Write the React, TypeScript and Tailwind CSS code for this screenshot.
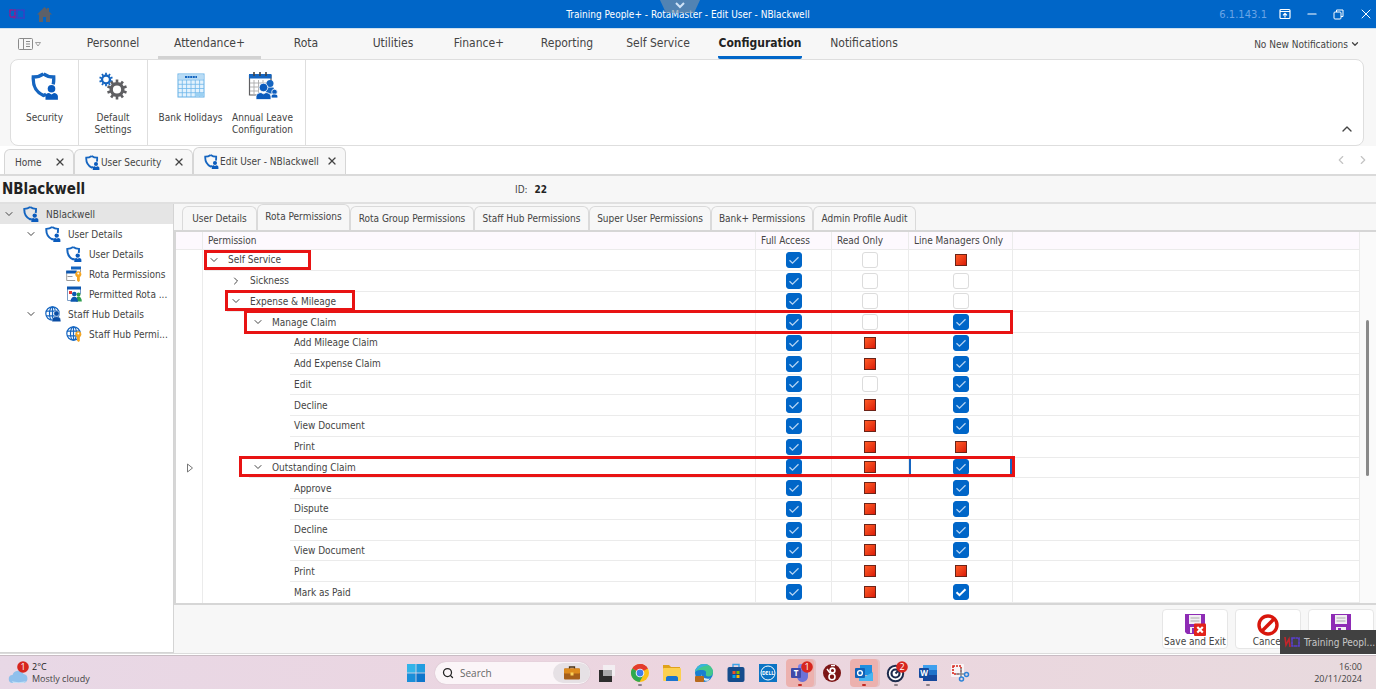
import { ReactNode, SVGProps } from "react"
import {
  ChevronDown,
  ChevronLeft,
  ChevronRight,
  ChevronUp,
  Minus,
  Search,
  X,
} from "lucide-react"
import clsx from "clsx"

type IconProps = SVGProps<SVGSVGElement>

/* ---------- icons ---------- */

const ShieldUser = (props: IconProps) => (
  <svg viewBox="0 0 28 28" {...props}>
    <path
      d="M12.500 1.800C9.500 4 6 5 2.300 5c-.4 7 .6 14 10.200 18.500 1-.4 1.800-.9 2.600-1.400M12.500 1.800C15.500 4 19 5 22.700 5c.1 2.500.1 5-.5 7.400"
      fill="none"
      stroke="#1565c0"
      strokeWidth="3.400"
    />
    <circle cx="20.500" cy="16.800" r="3.800" fill="#0a5bbd" />
    <path d="M14.500 27.800v-3.500c0-2 1.600-3.200 3.500-3.200l2.500 1.400 2.500-1.400c2 0 3.900 1.400 3.900 3.200v3.500z" fill="#0a5bbd" />
  </svg>
)

const Gear = ({ cx, cy, r, color }: { cx: number; cy: number; r: number; color: string }) => (
  <g transform={`translate(${cx} ${cy})`} stroke={color}>
    <circle r={r * 0.58} fill="none" strokeWidth={r * 0.34} />
    {[0, 36, 72, 108, 144, 180, 216, 252, 288, 324].map((angle) => (
      <line
        key={angle}
        y1={-r * 0.68}
        y2={-r}
        strokeWidth={r * 0.26}
        transform={`rotate(${angle})`}
      />
    ))}
  </g>
)

const Gears = (props: IconProps) => (
  <svg viewBox="0 0 28 28" {...props}>
    <Gear cx={7} cy={7.500} r={6.800} color="#1565c0" />
    <Gear cx={18} cy={17.500} r={10} color="#5f5f62" />
  </svg>
)

const CalendarGrid = (props: IconProps) => (
  <svg viewBox="0 0 28 28" {...props}>
    <rect x="1" y="2" width="26" height="23" fill="#e3f2fd" stroke="#64b0e6" />
    <rect x="1.500" y="2.500" width="25" height="5" fill="#b9dcf5" />
    <path d="M8 5h12" stroke="#1565c0" strokeWidth="2" strokeDasharray="2 .6" />
    <path
      d="M1 8h26M1 12.300h26M1 16.500h26M1 20.700h26M5.300 8v17M9.600 8v17M14 8v17M18.300 8v17M22.600 8v17"
      stroke="#6fb6ea"
      strokeWidth=".8"
    />
    <rect x="18.500" y="21" width="8" height="3.500" fill="#9bd0f2" />
  </svg>
)

const CalendarPeople = (props: IconProps) => (
  <svg viewBox="0 0 30 28" {...props}>
    <path d="M1.500 3v20H9M23 3v6" fill="none" stroke="#5f5f62" strokeWidth="1.200" />
    <path d="M1 2h22.500v4.500H1z" fill="#1565c0" />
    <path d="M6 0v4M12 0v4M18 0v4" stroke="#444" strokeWidth="1.600" />
    <path d="M2 11h20M2 15h12M2 19h8M6 8v14M10.500 8v14M15 8v6" stroke="#aaa" strokeWidth=".9" />
    <circle cx="22" cy="11.500" r="3.500" fill="#1565c0" />
    <path d="M18.500 15.500h7l1.500 6h-9z" fill="#1565c0" />
    <g fill="#0a5bbd" stroke="#fff" strokeWidth=".8">
      <circle cx="26.500" cy="20" r="2.800" />
      <path d="M23 26v-1.500c0-2 2-2.500 3.500-2.500s3.300.8 3.300 2.500V26z" />
      <circle cx="15.500" cy="15.500" r="4.300" />
      <path d="M8 27.600v-2.800c0-3 2.600-4 5-4.300l2.500 1.300 2.500-1.300c2.600.3 5 1.500 5 4.300v2.800z" />
    </g>
  </svg>
)

const KeyShape = () => (
  <g fill="#f5a623">
    <circle cx="12.300" cy="8.300" r="3" />
    <path d="M11 10.500h2.800V15l-1.400 1L11 14.600z" />
    <circle cx="12.300" cy="7.600" r="1" fill="#fff" />
  </g>
)

const FormKey = (props: IconProps) => (
  <svg viewBox="0 0 16 16" {...props}>
    <rect x="5" y=".5" width="10" height="3" fill="#1565c0" />
    <path d="M14.500 3v3M.7 5v9.500h8.500M1.500 10.500h5" fill="none" stroke="#9a9a9a" />
    <rect x=".2" y="4.500" width="10.500" height="3" fill="#0d57b0" />
    <KeyShape />
  </svg>
)

const PermittedRota = (props: IconProps) => (
  <svg viewBox="0 0 16 16" {...props}>
    <path d="M1.500 2v12.500H6M14.500 2v6" fill="none" stroke="#7a9cc6" />
    <rect x="1" y=".5" width="14" height="3" fill="#0d57b0" />
    <rect x="3" y="5" width="3" height="3" fill="#e53935" />
    <circle cx="12.500" cy="8.500" r="2" fill="#2e9e4f" />
    <path d="M10 15.500c0-3 .5-5 2.500-5s3.300 2 3.300 5z" fill="#2e9e4f" />
    <circle cx="8.300" cy="8" r="2.300" fill="#0d57b0" />
    <path d="M4.500 15.800c0-3 1.500-5 3.800-5s3.700 2 3.700 5z" fill="#0d57b0" />
  </svg>
)

const Globe = ({ withKey, ...props }: IconProps & { withKey?: boolean }) => (
  <svg viewBox="0 0 16 16" {...props}>
    <g fill="none" stroke="#1565c0" strokeWidth="1.200">
      <circle cx="7.500" cy="7.500" r="6.700" />
      <ellipse cx="7.500" cy="7.500" rx="3" ry="6.700" />
      <path d="M1 5.200h13M1 9.800h13M7.500 1v13" />
    </g>
    {withKey ? (
      <KeyShape />
    ) : (
      <g fill="#0a4da3" stroke="#fff" strokeWidth=".5">
        <circle cx="11.500" cy="7.500" r="2.700" />
        <path d="M7 15.800v-1.600c0-2 1.800-3.600 4.500-3.600s4.300 1.600 4.300 3.600v1.600z" />
      </g>
    )}
  </svg>
)

const Floppy = ({ exit, ...props }: IconProps & { exit?: boolean }) => (
  <svg viewBox="0 0 22 22" {...props}>
    <path d="M1 0h20v20H3l-2-2z" fill="#8e2bb5" />
    <rect x="5" y="1" width="12" height="9" fill="#f1eef3" />
    <path d="M6.500 4h9M6.500 7h9" stroke="#aaa" />
    <rect x="6" y="13" width="10" height="6" fill="#f1eef3" />
    <rect x="8" y="14" width="3" height="5" fill="#8e2bb5" />
    {exit && (
      <>
        <rect x="10" y="9.500" width="12" height="12.500" rx="1" fill="#e2231a" />
        <path d="M13.300 13l5.500 5.500M18.800 13l-5.500 5.500" stroke="#fff" strokeWidth="2.200" />
      </>
    )}
  </svg>
)

const Forbidden = (props: IconProps) => (
  <svg viewBox="0 0 22 22" {...props}>
    <circle cx="11" cy="11" r="9" fill="#fff" stroke="#d8160c" strokeWidth="3.400" />
    <path d="M17 5L5 17" stroke="#d8160c" strokeWidth="3.400" />
  </svg>
)

const AppLogo = (props: IconProps) => (
  <svg viewBox="0 0 16 12" fill="none" strokeWidth="1.600" {...props}>
    <path d="M1 2h5v7H1zM4 8l2 3" stroke="#8b1f8f" strokeDasharray="3 .5" />
    <path d="M8 2h7v8H8z" stroke="#3b3fc4" strokeDasharray="3 .4" />
  </svg>
)

/* ---------- data ---------- */

const MENU = [
  { label: "Personnel", width: "w-[90px]" },
  { label: "Attendance+", width: "w-[103px]", hovered: true },
  { label: "Rota", width: "w-[90px]" },
  { label: "Utilities", width: "w-[84px]" },
  { label: "Finance+", width: "w-[88px]" },
  { label: "Reporting", width: "w-[88px]" },
  { label: "Self Service", width: "w-[94px]" },
  { label: "Configuration", width: "w-[110px]", active: true },
  { label: "Notifications", width: "w-[98px]" },
]

const PERMISSION_TABS = [
  { label: "User Details", width: "w-[75px]" },
  { label: "Rota Permissions", width: "w-[93px]", active: true },
  { label: "Rota Group Permissions", width: "w-[124px]" },
  { label: "Staff Hub Permissions", width: "w-[115px]" },
  { label: "Super User Permissions", width: "w-[122px]" },
  { label: "Bank+ Permissions", width: "w-[102px]" },
  { label: "Admin Profile Audit", width: "w-[103px]" },
]

type TreeItem = { label: string; level: number; open?: boolean; icon: ReactNode }

const TREE: TreeItem[] = [
  { label: "NBlackwell", level: 0, open: true, icon: <ShieldUser className="size-4" /> },
  { label: "User Details", level: 1, open: true, icon: <ShieldUser className="size-4" /> },
  { label: "User Details", level: 2, icon: <ShieldUser className="size-4" /> },
  { label: "Rota Permissions", level: 2, icon: <FormKey className="size-4" /> },
  { label: "Permitted Rota ...", level: 2, icon: <PermittedRota className="size-4" /> },
  { label: "Staff Hub Details", level: 1, open: true, icon: <Globe className="size-4" /> },
  { label: "Staff Hub Permi...", level: 2, icon: <Globe withKey className="size-4" /> },
]

const TREE_INDENT = ["pl-[3px]", "pl-[25px]", "pl-[46px]"]

// on = ticked, off = empty, na = not applicable
type Access = "on" | "off" | "na"

type PermissionRow = {
  label: string
  level: number
  node?: "open" | "closed"
  access: [Access, Access, Access]
  current?: boolean
}

const ROWS: PermissionRow[] = [
  { label: "Self Service", level: 0, node: "open", access: ["on", "off", "na"] },
  { label: "Sickness", level: 1, node: "closed", access: ["on", "off", "off"] },
  { label: "Expense & Mileage", level: 1, node: "open", access: ["on", "off", "off"] },
  { label: "Manage Claim", level: 2, node: "open", access: ["on", "off", "on"] },
  { label: "Add Mileage Claim", level: 3, access: ["on", "na", "on"] },
  { label: "Add Expense Claim", level: 3, access: ["on", "na", "on"] },
  { label: "Edit", level: 3, access: ["on", "off", "on"] },
  { label: "Decline", level: 3, access: ["on", "na", "on"] },
  { label: "View Document", level: 3, access: ["on", "na", "on"] },
  { label: "Print", level: 3, access: ["on", "na", "na"] },
  { label: "Outstanding Claim", level: 2, node: "open", access: ["on", "na", "on"], current: true },
  { label: "Approve", level: 3, access: ["on", "na", "on"] },
  { label: "Dispute", level: 3, access: ["on", "na", "on"] },
  { label: "Decline", level: 3, access: ["on", "na", "on"] },
  { label: "View Document", level: 3, access: ["on", "na", "on"] },
  { label: "Print", level: 3, access: ["on", "na", "na"] },
  { label: "Mark as Paid", level: 3, access: ["on", "na", "on"] },
]

const COLUMNS = ["Full Access", "Read Only", "Line Managers Only"]

const ROW_INDENT = ["ml-[2px]", "ml-6", "ml-[46px]", "ml-[87px]"]

/* ---------- pieces ---------- */

const TitleBar = () => (
  <header className="relative grid h-7 shrink-0 grid-cols-[1fr_auto_1fr] items-center bg-[#0066c8] text-white">
    <div className="flex items-center gap-3 pl-[9px]">
      <AppLogo className="h-3 w-4" />
      <svg viewBox="0 0 15 15" className="size-[15px]" fill="#5d6068">
        <path d="M7.500 0L0 7.500h2V15h4v-5h3v5h4V7.500h2l-3-3V1h-2v1.500z" />
      </svg>
    </div>
    <h1 className="text-[10px]">Training People+ - RotaMaster - Edit User - NBlackwell</h1>
    <div className="flex items-center justify-end pr-0.5">
      <span className="mr-3 font-['DejaVu_Sans',sans-serif] text-[10px] text-[#6aa5e6]">
        6.1.143.1
      </span>
      <button aria-label="Full screen" className="mr-3.5">
        <svg viewBox="0 0 12 12" className="size-3" fill="none" stroke="#fff" strokeWidth="1.200">
          <rect x="1" y="1.500" width="10" height="9" rx="1" />
          <path d="M1 3.500h10M6 9.500V5.500M4 7.300l2-2 2 2" />
        </svg>
      </button>
      <button aria-label="Minimise" className="mr-3.5">
        <Minus className="size-3.5" />
      </button>
      <button aria-label="Restore" className="mr-3.5">
        <svg viewBox="0 0 11 11" className="size-[11px]" fill="none" stroke="#fff">
          <rect x="1" y="3" width="7" height="7" rx="1" />
          <path d="M3.500 3V1h6.500v6.500H8" />
        </svg>
      </button>
      <button aria-label="Close">
        <X className="size-4" strokeWidth={1.500} />
      </button>
    </div>
    <svg viewBox="0 0 40 13" className="absolute top-0 left-1/2 h-[13px] w-10 -translate-x-7">
      <path d="M0 0h40l-6 13H6z" fill="#7d93a8" fillOpacity=".65" />
      <path d="M16 3l4 4 4-4" fill="none" stroke="#cfe3f7" strokeWidth="2" />
    </svg>
  </header>
)

const MenuBar = () => (
  <nav className="flex h-[31px] shrink-0 items-stretch border-t border-[#cfe0ee] pl-[18px]">
    <button aria-label="Layout" className="flex w-[50px] items-center">
      <svg viewBox="0 0 24 12" className="h-3 w-6" fill="none" stroke="#8b8b8b">
        <rect x=".5" y=".5" width="14" height="11" rx="1" />
        <path d="M5.500 1v10M8 3.500h4M8 6h4M8 8.500h4" />
        <path d="M17.500 4.500h5L20 8z" strokeWidth=".8" />
      </svg>
    </button>
    {MENU.map((item) => (
      <button
        key={item.label}
        className={clsx(
          "flex flex-col items-center pt-0.5 text-[12px] leading-[25px]",
          item.width,
          item.active && "font-bold text-[#222]"
        )}
      >
        <span
          className={clsx(
            "border-b-3",
            item.hovered && "w-full border-[#d2d2d2]",
            item.active && "rounded-b-xs border-[#0066c8]",
            !item.hovered && !item.active && "border-transparent"
          )}
        >
          {item.label}
        </span>
      </button>
    ))}
    <button className="ml-auto flex items-center gap-0.5 pr-4 text-[10px]">
      No New Notifications <ChevronDown className="size-2.5" strokeWidth={3} />
    </button>
  </nav>
)

const RibbonButton = ({ icon, label, width }: { icon: ReactNode; label: string; width: string }) => (
  <button className={clsx("flex flex-col items-center gap-3 pt-3 text-[10px] leading-3", width)}>
    {icon}
    <span>{label}</span>
  </button>
)

const Ribbon = () => (
  <section className="mr-3 ml-[10px] flex h-[87px] shrink-0 items-stretch rounded-lg border border-[#dedede] bg-white">
    <div className="flex w-[68px] justify-center border-r border-[#dedede]">
      <RibbonButton icon={<ShieldUser className="size-7" />} label="Security" width="w-16" />
    </div>
    <div className="flex w-[69px] justify-center border-r border-[#dedede]">
      <RibbonButton icon={<Gears className="size-7" />} label="Default Settings" width="w-12" />
    </div>
    <div className="flex w-[158px] justify-center border-r border-[#dedede]">
      <RibbonButton icon={<CalendarGrid className="size-7" />} label="Bank Holidays" width="w-[72px]" />
      <RibbonButton icon={<CalendarPeople className="h-7 w-[30px]" />} label="Annual Leave Configuration" width="w-[72px]" />
    </div>
    <button aria-label="Collapse ribbon" className="mt-auto mr-2 mb-2 ml-auto">
      <ChevronUp className="size-4" />
    </button>
  </section>
)

const DocumentTab = ({
  label,
  icon,
  active,
  width,
}: {
  label: string
  icon?: boolean
  active?: boolean
  width: string
}) => (
  <div
    className={clsx(
      "flex items-center justify-between rounded-t-md border border-b-0 border-[#d6d6d6] bg-[#f7f7f7] pr-[7px] pl-2.5 text-[10px]",
      active ? "h-[27px]" : "h-[25px]",
      width
    )}
  >
    <a href="#" className="flex items-center whitespace-nowrap">
      {icon && <ShieldUser className="mr-px size-[15px]" />}
      {label}
    </a>
    <button aria-label={`Close ${label}`}>
      <X className="size-3" strokeWidth={2.500} />
    </button>
  </div>
)

const DocumentTabs = () => (
  <div className="flex h-[30px] shrink-0 items-end border-b-2 border-[#dadada] bg-white pr-1.5 pl-1">
    <DocumentTab label="Home" width="w-[70px]" />
    <DocumentTab label="User Security" icon width="w-[119px]" />
    <DocumentTab label="Edit User - NBlackwell" icon active width="w-[153px]" />
    <div className="mb-[7px] ml-auto flex gap-2 text-[#c4c4c4]">
      <ChevronLeft className="size-3.5" />
      <ChevronRight className="size-3.5" />
    </div>
  </div>
)

const NavTree = () => (
  <aside className="w-[174px] shrink-0 border-r border-b border-[#d4d4d4] bg-white">
    <ul>
      {TREE.map((item, idx) => (
        <li
          key={idx}
          className={clsx(
            "flex h-5 items-center text-[10px] whitespace-nowrap",
            TREE_INDENT[item.level],
            idx === 0 && "bg-[#e5e5e5]"
          )}
        >
          <span className="mr-2 w-3">{item.open && <ChevronDown className="size-3" />}</span>
          {item.icon}
          <a href="#" className="ml-[7px]">
            {item.label}
          </a>
        </li>
      ))}
    </ul>
  </aside>
)

const AccessBox = ({ value, label, bold }: { value: Access; label: string; bold?: boolean }) => {
  if (value === "na") {
    return (
      <input
        type="checkbox"
        disabled
        aria-label={label}
        className="mx-auto block size-3 appearance-none border border-[#6b2418] bg-linear-to-br from-[#ff5a26] to-[#dc1708]"
      />
    )
  }

  return (
    <label className="mx-auto grid size-4 place-items-center">
      <input
        type="checkbox"
        defaultChecked={value === "on"}
        aria-label={label}
        className="peer col-start-1 row-start-1 size-4 appearance-none rounded-[3px] border border-[#dcdcdc] bg-white checked:border-[#0066c8] checked:bg-[#0066c8]"
      />
      <svg
        viewBox="0 0 16 16"
        className="pointer-events-none col-start-1 row-start-1 hidden size-4 peer-checked:block"
        fill="none"
        stroke={bold ? "#fff" : "#b4d4f4"}
        strokeWidth={bold ? 2 : 1.300}
      >
        <path d="M3.500 8.200l3 3 6-6" />
      </svg>
    </label>
  )
}

const PermissionTable = () => (
  <table className="h-full w-full table-fixed border-separate border-spacing-0 text-left text-[10px]">
    <colgroup>
      <col className="w-[27px]" />
      <col className="w-[553px]" />
      <col className="w-[76px]" />
      <col className="w-[77px]" />
      <col className="w-[104px]" />
      <col />
    </colgroup>
    <thead>
      <tr className="h-[18px] bg-[#fdf9fe] [&>th]:border-r [&>th]:border-b [&>th]:border-[#ebebeb] [&>th]:p-0 [&>th]:pl-[5px] [&>th]:font-normal">
        <th aria-label="Current row" />
        <th>Permission</th>
        {COLUMNS.map((column) => (
          <th key={column} className="whitespace-nowrap">
            {column}
          </th>
        ))}
        <th aria-hidden="true" />
      </tr>
    </thead>
    <tbody>
      {ROWS.map((row, idx) => (
        <tr key={idx} className="[&>td]:border-r [&>td]:border-[#ebebeb] [&>td]:p-0">
          <td>
            {row.current && (
              <svg viewBox="0 0 8 10" className="ml-2.5 h-2.5 w-2" fill="none" stroke="#777">
                <path d="M1.500 1v8L6.500 5z" />
              </svg>
            )}
          </td>
          <td className="h-px">
            <div
              className={clsx(
                "flex h-full min-h-5 items-center border-b border-[#ebebeb]",
                ROW_INDENT[row.level]
              )}
            >
              {row.node && (
                <button aria-label={`Toggle ${row.label}`} className="mr-2 ml-[3px]">
                  {row.node === "open" ? (
                    <ChevronDown className="size-3" />
                  ) : (
                    <ChevronRight className="size-3" />
                  )}
                </button>
              )}
              <span className={clsx(!row.node && "ml-1")}>{row.label}</span>
            </div>
          </td>
          {row.access.map((value, col) => (
            <td
              key={col}
              className={clsx(
                "border-b",
                row.current && col === 2 && "shadow-[inset_2px_0_#1565c0,inset_-2px_0_#1565c0]"
              )}
            >
              <AccessBox
                value={value}
                label={`${row.label}: ${COLUMNS[col]}`}
                bold={idx === ROWS.length - 1 && col === 2}
              />
            </td>
          ))}
          <td className="border-b" />
        </tr>
      ))}
    </tbody>
  </table>
)

// Red boxes drawn over the grid to point out rows
const Highlights = () => (
  <div className="pointer-events-none absolute inset-0 [&>span]:absolute [&>span]:border-3 [&>span]:border-[#e81313]">
    <span className="top-[18px] left-7 h-5 w-[107px]" />
    <span className="top-[58px] left-[49px] h-[21px] w-[130px]" />
    <span className="top-[78px] left-[68px] h-6 w-[769px]" />
    <span className="top-[224px] left-[63px] h-[21px] w-[776px]" />
  </div>
)

const ActionButton = ({ icon, label, hideLabel }: { icon: ReactNode; label: string; hideLabel?: boolean }) => (
  <button
    aria-label={label}
    className="flex h-10 w-[66px] flex-col items-center justify-between rounded-sm border border-[#e6e6e6] bg-white pt-1 text-[10px] leading-3 whitespace-nowrap"
  >
    {icon}
    {!hideLabel && label}
  </button>
)

const Editor = () => (
  <main className="flex min-w-0 flex-1 flex-col">
    <div className="flex h-7 shrink-0 items-end border-b-2 border-[#d6d6d6] pl-2">
      {PERMISSION_TABS.map((tab) => (
        <button
          key={tab.label}
          className={clsx(
            "rounded-t-md border border-b-0 border-[#dadada] text-[10px] whitespace-nowrap",
            tab.active ? "h-[26px] pb-0.5" : "h-6",
            tab.width
          )}
        >
          {tab.label}
        </button>
      ))}
    </div>
    <div className="flex min-h-0 flex-1 border-b-2 border-l-2 border-[#d6d6d6] bg-white">
      <div className="relative min-w-0 flex-1">
        <PermissionTable />
        <Highlights />
      </div>
      <div className="w-4 bg-[#fafafa]">
        <div className="mt-22 ml-1.5 h-[156px] w-[3px] rounded-full bg-[#8a8a8a]" />
      </div>
    </div>
    <div className="flex h-12 shrink-0 items-start justify-end gap-[7px] pt-1 pr-0.5">
      <ActionButton icon={<Floppy exit className="size-[22px]" />} label="Save and Exit" />
      <ActionButton icon={<Forbidden className="size-[22px]" />} label="Cancel" />
      <ActionButton icon={<Floppy className="size-[22px]" />} label="Save" hideLabel />
    </div>
  </main>
)

/* ---------- taskbar ---------- */

const Badge = ({ x, y, n }: { x: number; y: number; n: number }) => (
  <g>
    <circle cx={x} cy={y} r="5.800" fill="#d7261e" />
    <text x={x} y={y + 3} textAnchor="middle" fontSize="9" fill="#fff">
      {n}
    </text>
  </g>
)

const TASKS: { name: string; running?: boolean; alert?: boolean; art: ReactNode }[] = [
  {
    name: "Task View",
    art: (
      <>
        <rect x="5" y="11" width="13" height="12" fill="#2d2d2d" />
        <rect x="9" y="6" width="12" height="11" fill="#f4f2f4" fillOpacity=".85" />
        <rect x="9" y="11" width="9" height="6" fill="#a9a9ab" />
      </>
    ),
  },
  {
    name: "Chrome",
    running: true,
    art: (
      <>
        <circle cx="14" cy="14" r="9" fill="#fbc116" />
        <path d="M14 14L6.200 9.500A9 9 0 0 1 21.800 9.500z" fill="#e33b2e" />
        <path d="M14 5a9 9 0 0 1 7.800 4.500H14z" fill="#e33b2e" />
        <path d="M14 14L6.200 9.500A9 9 0 0 0 13.500 23l4-7z" fill="#2da94f" />
        <circle cx="14" cy="14" r="4.300" fill="#fff" />
        <circle cx="14" cy="14" r="3.400" fill="#3f7de8" />
      </>
    ),
  },
  {
    name: "File Explorer",
    art: (
      <>
        <path d="M5 6h6l2 2h9v5H5z" fill="#e0a21b" />
        <rect x="5" y="9" width="18" height="13" rx="1" fill="#fcd050" />
        <path d="M8 22v-3c0-1 .8-2 2-2h8c1.200 0 2 1 2 2v3z" fill="#1a74cf" />
      </>
    ),
  },
  {
    name: "Edge",
    art: (
      <>
        <circle cx="14" cy="14" r="9" fill="#1a7fd0" />
        <path d="M5 13a9 9 0 0 1 9-8c5 0 9 3.500 9 8 0 3-2 4.500-4.500 4.500S15.500 16.500 16 14.500s-1-3.500-3.500-3.500S6.500 11 5 13z" fill="#43c78c" />
        <path d="M5 13a9 9 0 0 1 9-8c2 0 4 .6 5 1.500-5 0-9 1.500-14 6.500z" fill="#3ab3dd" />
        <path d="M11 14c0 4 4 6.500 9 5.500l-2 2.200c-4 1-7-3-7-7.700z" fill="#d9e9f5" />
        <rect x="5" y="17" width="9" height="6" rx="1" fill="#b86a1c" />
      </>
    ),
  },
  {
    name: "Microsoft Store",
    art: (
      <>
        <path d="M11 8V5.500h6V8" fill="none" stroke="#3ba4e8" strokeWidth="1.400" />
        <rect x="5.500" y="8" width="17" height="15" rx="2" fill="#154c8c" />
        <path d="M10.500 12h3v3h-3z" fill="#f25022" />
        <path d="M14.500 12h3v3h-3z" fill="#7fba00" />
        <path d="M10.500 16h3v3h-3z" fill="#00a4ef" />
        <path d="M14.500 16h3v3h-3z" fill="#ffb900" />
      </>
    ),
  },
  {
    name: "Dell",
    art: (
      <>
        <rect x="5" y="5" width="18" height="18" fill="#0b74c4" />
        <circle cx="14" cy="14" r="7" fill="none" stroke="#fff" />
        <text x="14" y="16" textAnchor="middle" fontSize="5" fontWeight="bold" fill="#fff">
          DELL
        </text>
      </>
    ),
  },
  {
    name: "Teams",
    running: true,
    alert: true,
    art: (
      <>
        <circle cx="15" cy="8" r="3" fill="#7b83eb" />
        <path d="M11 11h11v6a5.500 5.500 0 0 1-11 1z" fill="#6a72d8" />
        <rect x="5" y="9" width="10" height="10" rx="1" fill="#3f4aa8" />
        <text x="10" y="17" textAnchor="middle" fontSize="8" fontWeight="bold" fill="#fff">
          T
        </text>
        <Badge x={21} y={8} n={1} />
      </>
    ),
  },
  {
    name: "RotaMaster",
    art: (
      <>
        <circle cx="14" cy="14" r="9" fill="#7c1515" />
        <circle cx="14.500" cy="11.500" r="2.400" fill="none" stroke="#fff" strokeWidth="1.600" />
        <circle cx="14" cy="17.800" r="3" fill="none" stroke="#fff" strokeWidth="1.600" />
        <path d="M13 6.500h4M9 10l3 4" stroke="#fff" strokeWidth="1.400" />
      </>
    ),
  },
  {
    name: "Outlook",
    running: true,
    alert: true,
    art: (
      <>
        <rect x="10" y="6" width="12" height="10" fill="#1f8fe0" />
        <path d="M9 13l7 4 7-4v9H9z" fill="#46b4f0" />
        <rect x="5" y="9" width="10" height="10" rx="1" fill="#0f62b8" />
        <circle cx="10" cy="14" r="2.400" fill="none" stroke="#fff" strokeWidth="1.400" />
      </>
    ),
  },
  {
    name: "Authenticator",
    running: true,
    art: (
      <>
        <circle cx="13.500" cy="14.500" r="7.700" fill="#fff" stroke="#1d2b4c" strokeWidth="2" />
        <circle cx="13.500" cy="14.500" r="4" fill="none" stroke="#1d2b4c" strokeWidth="2.200" />
        <path d="M13.500 14.500l6-6" stroke="#1d2b4c" strokeWidth="2" />
        <Badge x={20} y={8} n={2} />
      </>
    ),
  },
  {
    name: "Word",
    running: true,
    art: (
      <>
        <rect x="9" y="6" width="14" height="6" fill="#3fa0ee" />
        <rect x="9" y="11" width="14" height="6" fill="#2072c9" />
        <rect x="9" y="16" width="14" height="6" fill="#15479c" />
        <rect x="5" y="9" width="10" height="10" rx="1" fill="#134a9e" />
        <text x="10" y="17" textAnchor="middle" fontSize="8" fontWeight="bold" fill="#fff">
          W
        </text>
      </>
    ),
  },
  {
    name: "Snipping Tool",
    art: (
      <>
        <rect x="5" y="5" width="13" height="13" rx="1" fill="#f7f4f6" />
        <rect x="7" y="7" width="8" height="8" fill="none" stroke="#d8261c" strokeWidth="1.600" strokeDasharray="2 1" />
        <path d="M15 9v9M10 15h9" stroke="#8d8d92" strokeWidth="1.600" />
        <circle cx="15.500" cy="20" r="2" fill="none" stroke="#2d83d8" strokeWidth="1.500" />
        <circle cx="20.500" cy="15.500" r="2" fill="none" stroke="#2d83d8" strokeWidth="1.500" />
      </>
    ),
  },
]

const Taskbar = () => (
  <footer className="grid h-[34px] shrink-0 grid-cols-[1fr_auto_1fr] items-center border-t border-[#c9bcc4] bg-linear-to-r from-[#e8d8e6] via-[#ecd5df] to-[#e8dade] font-['Open_Sans',sans-serif] text-[9px] leading-3 text-[#444]">
    <div className="flex items-center pl-2">
      <svg viewBox="0 0 22 24" className="mr-[2px] h-6 w-[22px]">
        <path d="M5 22a4 4 0 0 1-.5-8 6 6 0 0 1 11-1 4.600 4.600 0 0 1 .5 9z" fill="#8fc0ec" />
        <path d="M4 20c3 1.500 10 1.500 14 0l-2 2H5z" fill="#c3dff5" />
        <Badge x={15} y={6} n={1} />
      </svg>
      <div>
        <p className="text-[#222]">2°C</p>
        <p>Mostly cloudy</p>
      </div>
    </div>
    <div className="flex items-center">
      <button aria-label="Start" className="flex w-8 justify-center">
        <svg viewBox="0 0 18 18" className="size-[18px]">
          <path d="M0 0h8.600v8.600H0z" fill="#32b4e9" />
          <path d="M9.400 0H18v8.600H9.400z" fill="#219de0" />
          <path d="M0 9.400h8.600V18H0z" fill="#1b8fd9" />
          <path d="M9.400 9.400H18V18H9.400z" fill="#0d76cc" />
        </svg>
      </button>
      <label className="mr-0.5 ml-[3px] flex h-[22px] w-[155px] items-center rounded-full bg-[#fbf5f8] pl-[7px] shadow-[0_0_1px_#b9a9b3]">
        <Search className="size-3 text-[#222]" strokeWidth={2.500} />
        <input
          type="text"
          placeholder="Search"
          aria-label="Search"
          className="ml-1.5 w-0 flex-1 text-[10px] outline-none placeholder:text-[#666]"
        />
        <span className="flex h-5 w-[37px] items-center justify-center rounded-full bg-[#e6e1e5]">
          <svg viewBox="0 0 16 14" className="h-3.5 w-4">
            <path d="M5.500 3V1h5v2" fill="none" stroke="#4a3214" strokeWidth="1.300" />
            <rect y="2.500" width="16" height="11" rx="1" fill="#a65f1a" />
            <rect y="2.500" width="16" height="5" rx="1" fill="#dd8a1c" />
            <rect x="6.500" y="6.500" width="3" height="3" fill="#fbd25a" />
          </svg>
        </span>
      </label>
      {TASKS.map((task) => (
        <button
          key={task.name}
          aria-label={task.name}
          className="flex h-8 w-8 items-center justify-center"
        >
          <span
            className={clsx(
              "block size-7 rounded-sm",
              task.alert && "bg-[#ecb1ae] shadow-[2px_0_0_#e4c3c6]"
            )}
          >
            <svg viewBox="0 0 28 28" className="size-7">
              {task.art}
              {task.running && (
                <rect
                  x="12"
                  y="25"
                  width="4"
                  height="2"
                  rx="1"
                  fill={task.alert ? "#c22a22" : "#8c7f87"}
                />
              )}
            </svg>
          </span>
        </button>
      ))}
    </div>
    <div className="pr-3.5 text-right">
      <p>16:00</p>
      <p>20/11/2024</p>
    </div>
  </footer>
)

export default function App() {
  return (
    <div className="relative flex h-screen flex-col overflow-hidden bg-[#f7f7f7] font-['DejaVu_Sans_Condensed',sans-serif] text-[#444]">
      <TitleBar />
      <MenuBar />
      <Ribbon />
      <DocumentTabs />
      <div className="flex h-7 shrink-0 items-center border-b-2 border-[#e0e0e0] pl-0.5">
        <h2 className="w-[513px] text-[15px] font-bold text-[#222]">NBlackwell</h2>
        <p className="text-[10px]">
          ID: <b className="ml-1 text-[#222]">22</b>
        </p>
      </div>
      <div className="flex min-h-0 flex-1">
        <NavTree />
        <Editor />
      </div>
      <div className="h-0.5 shrink-0 border-t border-[#dcdcdc] bg-white" />
      <Taskbar />
      <div
        role="tooltip"
        className="absolute right-0 bottom-[35px] flex h-6 w-24 items-center gap-1 bg-[#414141] pl-1 text-[10px] whitespace-nowrap text-[#c8c8c8]"
      >
        <svg viewBox="0 0 16 12" className="h-3 w-4 shrink-0" fill="none" strokeWidth="1.600">
          <path d="M1 1l1 8 3-6 1 8" stroke="#c3262b" />
          <path d="M8 2h7v8H8z" stroke="#5a3fd0" strokeDasharray="3 .4" />
        </svg>
        Training Peopl...
      </div>
    </div>
  )
}
